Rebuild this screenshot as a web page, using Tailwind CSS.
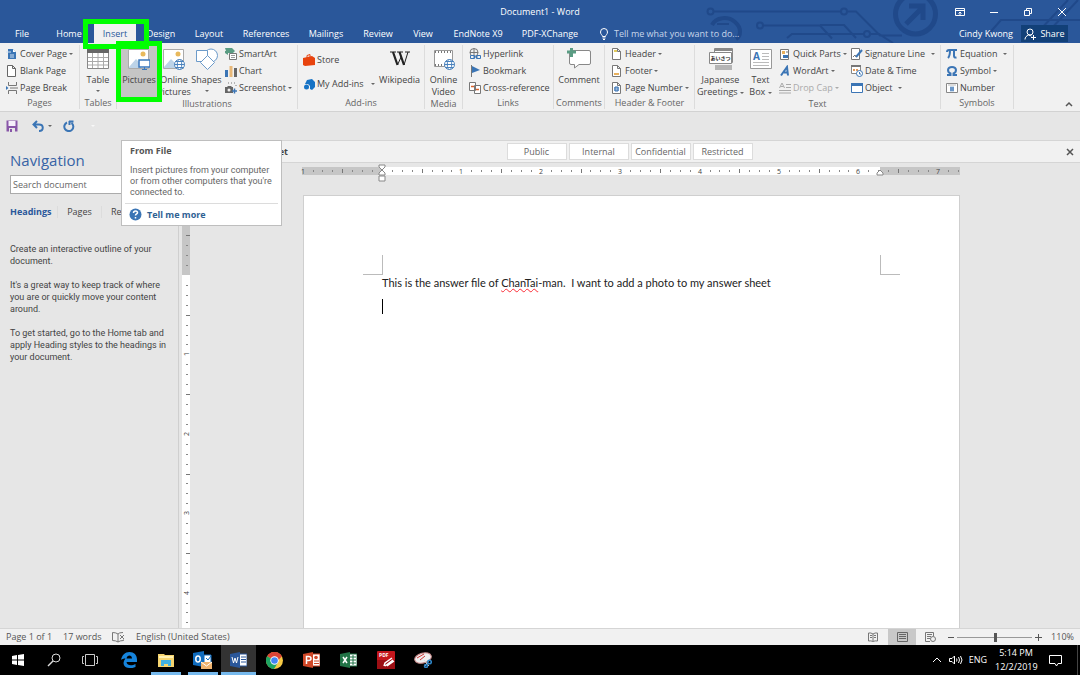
<!DOCTYPE html>
<html lang="en">
<head>
  <meta charset="UTF-8" />
  <title>Document1 - Word</title>
  <meta name="viewport" content="width=device-width, initial-scale=1.0" />
  <script src="https://cdn.jsdelivr.net/npm/@tailwindcss/browser@4"></script>
</head>
<body class="relative flex min-h-screen flex-col overflow-hidden bg-[#e6e6e6] font-['Open_Sans','Noto_Sans',sans-serif] text-[9px] leading-3 whitespace-nowrap text-[#444]">

  <!-- Shared drop-down arrow -->
  <svg class="hidden">
    <symbol id="arrow" viewBox="0 0 4 2"><path d="M0 0h4L2 2z" fill="#666" /></symbol>
  </svg>

  <!-- Title bar and tabs -->
  <header class="relative bg-[#2a579a] text-white">
    <svg class="absolute top-0 right-0 h-[43px] w-[380px]" viewBox="700 0 380 43" fill="none" stroke="#20498a" stroke-width="2">
      <circle cx="710.500" cy="11.500" r="3" />
      <path d="M714 11.500h127M848 11.500h8l24 24h22M763 25.500h57l12 13M787 38l5-4h72M871 34h8l14 9" />
      <circle cx="844" cy="11.500" r="3" />
      <circle cx="760" cy="25.500" r="3" />
      <circle cx="867" cy="34" r="3" />
      <path d="M712 25c4-8 16-9 23-3s6 14 1 17" stroke-width="4" />
      <path d="M717 24h12M820 25h24l12 13" />
      <circle cx="915.500" cy="14" r="20" stroke-width="5" />
      <path d="M906 24l16-16M909 6h14v14" stroke-width="5" />
      <path d="M985 38l16-18h79M1040 30l28-30M1050 30l28-30" />
    </svg>

    <div class="relative grid h-6 grid-cols-3 items-center">
      <span></span>
      <h1 class="text-center">Document1 - Word</h1>
      <div class="flex items-center justify-end gap-[22px] pr-3">
        <button aria-label="Ribbon display options"><svg class="h-3 w-3" viewBox="0 0 12 12" fill="none" stroke="#fff"><path d="M1.500 2.500h9v7h-9zM1.500 4.500h9M6 9V6M4.500 7.500L6 6l1.500 1.500" /></svg></button>
        <button aria-label="Minimize"><svg class="h-3 w-3" viewBox="0 0 12 12" stroke="#fff"><path d="M2 6.500h8" /></svg></button>
        <button aria-label="Restore"><svg class="h-3 w-3" viewBox="0 0 12 12" fill="none" stroke="#fff"><path d="M2.500 4.500h5v5h-5zM4.500 4V2.500h5v5H8" /></svg></button>
        <button aria-label="Close"><svg class="h-3 w-3" viewBox="0 0 12 12" stroke="#fff"><path d="M2 2l8 8M10 2l-8 8" /></svg></button>
      </div>
    </div>

    <div class="relative flex h-[19px] items-stretch justify-between">
      <nav class="flex text-center leading-[19px]">
        <a href="#" class="w-11">File</a>
        <a href="#" class="w-[50px]">Home</a>
        <a href="#" class="w-[42px] bg-[#f1f1f1] text-[#2a579a]">Insert</a>
        <a href="#" class="w-[50px]">Design</a>
        <a href="#" class="w-[46px]">Layout</a>
        <a href="#" class="w-[68px]">References</a>
        <a href="#" class="w-[52px]">Mailings</a>
        <a href="#" class="w-[52px]">Review</a>
        <a href="#" class="w-[38px]">View</a>
        <a href="#" class="w-[72px]">EndNote X9</a>
        <a href="#" class="w-[72px]">PDF-XChange</a>
        <a href="#" class="ml-3 flex items-center gap-1 text-[#c8d6ea]">
          <svg class="h-3 w-3" viewBox="0 0 12 12" fill="none" stroke="#fff"><path d="M4.500 8.500C4.500 7 2.500 6.500 2.500 4a3.500 3.500 0 017 0c0 2.500-2 3-2 4.500zM4.500 10h3M5 11.500h2" /></svg>
          Tell me what you want to do...
        </a>
      </nav>
      <div class="flex items-center gap-2 pr-3">
        <span>Cindy Kwong</span>
        <button class="flex h-[17px] w-[47px] items-center justify-center gap-1 bg-[#124078]">
          <svg class="h-3 w-3" viewBox="0 0 12 12" fill="none" stroke="#fff"><circle cx="6" cy="4" r="3" /><path d="M1 11.500C1 9 2.500 8 4.500 7l3 1M7 9.500h5M9.500 7v5" /></svg>
          Share
        </button>
      </div>
    </div>
  </header>

  <!-- Ribbon -->
  <section class="flex h-[69px] border-b border-[#d2d2d2] bg-[#f1f1f1] pt-[2px] pb-[2px]">

    <div class="flex w-20 shrink-0 flex-col border-r border-[#dcdcdc]">
      <div class="flex h-[54px] flex-col pl-[6px]">
        <button class="flex h-[17px] items-center gap-[2px]">
          <svg class="h-3 w-3" viewBox="0 0 12 12"><path d="M2 1h5l3 3v7H2z" fill="#3b75b5" /><path d="M7 1v3h3" fill="#fff" /><path d="M0 4h5M4 7h4M4 9h4" stroke="#cfe0f2" /></svg>
          Cover Page <svg class="h-[2px] w-1"><use href="#arrow" /></svg>
        </button>
        <button class="flex h-[17px] items-center gap-[2px]">
          <svg class="h-3 w-3" viewBox="0 0 12 12" fill="#fff" stroke="#666"><path d="M1.500.5h5l3 3v8h-8zM6.500.5v3h3" /></svg>
          Blank Page
        </button>
        <button class="flex h-[17px] items-center gap-[2px]">
          <svg class="h-3 w-3" viewBox="0 0 12 12" fill="none" stroke="#777"><path d="M2.500 0v3.500h8V0M2.500 12V8.500h8V12M4 6h8" /><path d="M0 4l2.500 2L0 8z" fill="#3b75b5" stroke="none" /></svg>
          Page Break
        </button>
      </div>
      <span class="text-center text-[#666]">Pages</span>
    </div>

    <div class="flex w-[37px] shrink-0 flex-col border-r border-[#dcdcdc]">
      <button class="flex h-[54px] flex-col items-center pt-[3px]">
        <svg class="mb-1 h-[22px] w-[22px] shrink-0" viewBox="0 0 22 22"><path d="M.5 1.500h21v19H.5z" fill="#fff" stroke="#888" /><path d="M0 1h22v4H0z" fill="#666" /><path d="M1 9.500h20M1 13.500h20M1 17h20M5.500 5v15M11 5v15M16.500 5v15" stroke="#aaa" /></svg>
        Table
        <svg class="mt-1 h-[2px] w-1"><use href="#arrow" /></svg>
      </button>
      <span class="text-center text-[#666]">Tables</span>
    </div>

    <div class="flex w-[181px] shrink-0 flex-col border-r border-[#dcdcdc]">
      <div class="flex h-[54px] pl-1">
        <button class="flex w-9 flex-col items-center bg-[#c5c5c5] pt-[3px]">
          <svg class="mb-1 h-[22px] w-[22px] shrink-0" viewBox="0 0 22 22"><path d="M.5 1.500h20v19H.5z" fill="#fff" stroke="#aaa" /><circle cx="15" cy="6" r="2.500" fill="#e8b95c" /><path d="M1 19l7-8 5 5v4H1z" fill="#bcd3e8" /><path d="M11 12h11v7H11z" fill="#fff" stroke="#3b78bd" stroke-width="1.500" /><path d="M14 21.500h5M16.500 19v3" stroke="#3b78bd" /></svg>
          Pictures
        </button>
        <button class="flex w-[34px] flex-col items-center pt-[3px]">
          <svg class="mb-1 h-[22px] w-[22px] shrink-0" viewBox="0 0 22 22"><path d="M.5 1.500h20v19H.5z" fill="#fff" stroke="#aaa" /><circle cx="15" cy="6" r="2.500" fill="#e8b95c" /><path d="M1 19l7-8 5 5v4H1z" fill="#bcd3e8" /><g fill="#fff" stroke="#4a82bd"><circle cx="16.500" cy="16.500" r="5" /><ellipse cx="16.500" cy="16.500" rx="2.200" ry="5" /><path d="M11.500 16.500h10M12.500 13.500h8M12.500 19.500h8" /></g></svg>
          <span>Online<br />Pictures</span>
        </button>
        <button class="flex w-[31px] flex-col items-center pt-[3px]">
          <svg class="mb-1 h-[22px] w-[22px] shrink-0" viewBox="0 0 22 22" fill="#fff" stroke="#6c9bca"><circle cx="15" cy="7.500" r="6.500" /><path d="M.5 2.500h11v11H.5z" /><path d="M11.500 7.500l7 7-7 7-7-7z" /></svg>
          Shapes
          <svg class="mt-1 h-[2px] w-1"><use href="#arrow" /></svg>
        </button>
        <div class="flex flex-col pl-[3px]">
          <button class="flex h-[17px] items-center gap-[2px]">
            <svg class="h-3 w-3" viewBox="0 0 12 12"><path d="M0 0h7l3 3-2 2H3v2L0 5V3h1z" fill="#5a9c83" /><path d="M4.500 5.500h7v6h-7z" fill="#fff" stroke="#777" /><path d="M6 7.500h4M6 9.500h4" stroke="#999" /></svg>
            SmartArt
          </button>
          <button class="flex h-[17px] items-center gap-[2px]">
            <svg class="h-3 w-3" viewBox="0 0 12 12"><path d="M0 5h3v7H0z" fill="#3b75b5" /><path d="M4.500 1h3v11h-3z" fill="#e8b878" /><path d="M9 3h3v9H9z" fill="#666" /></svg>
            Chart
          </button>
          <button class="flex h-[17px] items-center gap-[2px]">
            <svg class="h-3 w-3" viewBox="0 0 12 12"><path d="M0 5h2l1-1h3l1 1h1v6H0z" fill="#666" /><circle cx="4" cy="8" r="1.500" fill="#f1f1f1" /><path d="M3 1h1M6 1h1M9 1h1M11 3v1" stroke="#777" /><path d="M7 9h5M9.500 6.500v5" stroke="#3b75b5" stroke-width="1.500" /></svg>
            Screenshot <svg class="h-[2px] w-1"><use href="#arrow" /></svg>
          </button>
        </div>
      </div>
      <span class="text-center text-[#666]">Illustrations</span>
    </div>

    <div class="flex w-[127px] shrink-0 flex-col border-r border-[#dcdcdc]">
      <div class="flex h-[54px] justify-between pr-1 pl-[5px]">
        <div class="flex flex-col pt-[3px]">
          <button class="flex h-6 items-center gap-[2px]">
            <svg class="h-3 w-3" viewBox="0 0 12 12"><path d="M0 4l9-2 3 2v7l-10 1L0 11z" fill="#e8430e" /><path d="M4 4V1.500L7 .5V3" fill="none" stroke="#e8430e" /></svg>
            Store
          </button>
          <button class="flex h-6 items-center gap-[2px]">
            <svg class="h-3 w-3" viewBox="0 0 12 12" fill="#1673c5"><path d="M4 2l5-1 3 3v5l-3 3-2-1V8L5 6H2z" /><circle cx="3.500" cy="9" r="2.500" /></svg>
            My Add-ins <svg class="ml-[5px] h-[2px] w-1"><use href="#arrow" /></svg>
          </button>
        </div>
        <button class="flex flex-col items-center pt-[3px]">
          <svg class="mb-1 h-[22px] w-[22px] shrink-0" viewBox="0 0 22 22" fill="none" stroke="#222"><path d="M1 4h6M8 4h6M16 4h5" /><path d="M4 4l4.500 13M10.500 4L15 17" stroke-width="2.200" /><path d="M8.500 17l4-9M15 17l4-13" /></svg>
          Wikipedia
        </button>
      </div>
      <span class="text-center text-[#666]">Add-ins</span>
    </div>

    <div class="flex w-[38px] shrink-0 flex-col border-r border-[#dcdcdc]">
      <button class="flex h-[54px] flex-col items-center pt-[3px]">
        <svg class="mb-1 h-[22px] w-[22px] shrink-0" viewBox="0 0 22 22"><path d="M1.500 2.500h18v16h-18z" fill="#fff" stroke="#999" /><path d="M2 4h17M2 17h17" stroke="#777" stroke-width="2" stroke-dasharray="1 2" /><g fill="#fff" stroke="#4a82bd"><circle cx="16.500" cy="16.500" r="5" /><ellipse cx="16.500" cy="16.500" rx="2.200" ry="5" /><path d="M11.500 16.500h10M12.500 13.500h8M12.500 19.500h8" /></g></svg>
        <span>Online<br />Video</span>
      </button>
      <span class="text-center text-[#666]">Media</span>
    </div>

    <div class="flex w-[91px] shrink-0 flex-col border-r border-[#dcdcdc]">
      <div class="flex h-[54px] flex-col pl-[6px]">
        <button class="flex h-[17px] items-center gap-[2px]">
          <svg class="h-3 w-3" viewBox="0 0 12 12" fill="none"><g stroke="#777"><circle cx="5" cy="4.500" r="4" /><path d="M1 4.500h8M5 .5v8" /></g><path d="M1.500 7.500h4v3h-4zM7.500 7.500h4v3h-4zM4 9h5" fill="#f1f1f1" stroke="#3b75b5" /></svg>
          Hyperlink
        </button>
        <button class="flex h-[17px] items-center gap-[2px]">
          <svg class="h-3 w-3" viewBox="0 0 12 12"><path d="M2.500 0v12" stroke="#777" /><path d="M3 1l8 4-8 3z" fill="#3b75b5" /></svg>
          Bookmark
        </button>
        <button class="flex h-[17px] items-center gap-[2px]">
          <svg class="h-3 w-3" viewBox="0 0 12 12" fill="#fff" stroke="#777"><path d="M.5.5h6v8h-6zM5.500 3.500h6v8h-6z" /><path d="M2 4.500h3M7 7.500h3" stroke="#d9622b" stroke-width="1.500" /></svg>
          Cross-reference
        </button>
      </div>
      <span class="text-center text-[#666]">Links</span>
    </div>

    <div class="flex w-[51px] shrink-0 flex-col border-r border-[#dcdcdc]">
      <button class="flex h-[54px] flex-col items-center pt-[3px]">
        <svg class="mb-1 h-[22px] w-6 shrink-0" viewBox="0 0 24 22"><path d="M4 2.500h18q1.500 0 1.500 1.500v11q0 1.500-1.500 1.500h-10L7.500 20v-3.500H4q-1.500 0-1.500-1.500V4q0-1.500 1.500-1.500z" fill="#fff" stroke="#888" /><path d="M0 4h9M4.500 0v9" stroke="#5a9c83" stroke-width="3" /></svg>
        Comment
      </button>
      <span class="text-center text-[#666]">Comments</span>
    </div>

    <div class="flex w-[90px] shrink-0 flex-col border-r border-[#dcdcdc]">
      <div class="flex h-[54px] flex-col pl-[6px]">
        <button class="flex h-[17px] items-center gap-[2px]">
          <svg class="h-3 w-3" viewBox="0 0 12 12"><path d="M1.500.5h5l3 3v8h-8zM6.500.5v3h3" fill="#fff" stroke="#777" /><path d="M3 2h3v2H3z" fill="#e2cb5c" /></svg>
          Header <svg class="h-[2px] w-1"><use href="#arrow" /></svg>
        </button>
        <button class="flex h-[17px] items-center gap-[2px]">
          <svg class="h-3 w-3" viewBox="0 0 12 12"><path d="M1.500.5h5l3 3v8h-8zM6.500.5v3h3" fill="#fff" stroke="#777" /><path d="M3 8h5v2H3z" fill="#e8b05c" /></svg>
          Footer <svg class="h-[2px] w-1"><use href="#arrow" /></svg>
        </button>
        <button class="flex h-[17px] items-center gap-[2px]">
          <svg class="h-3 w-3" viewBox="0 0 12 12"><path d="M1.500.5h5l3 3v8h-8zM6.500.5v3h3" fill="#fff" stroke="#777" /><path d="M4 5h3v4H4zM3 6h5M3 8h5" fill="none" stroke="#3b75b5" /></svg>
          Page Number <svg class="h-[2px] w-1"><use href="#arrow" /></svg>
        </button>
      </div>
      <span class="text-center text-[#666]">Header &amp; Footer</span>
    </div>

    <div class="flex w-[246px] shrink-0 flex-col border-r border-[#dcdcdc]">
      <div class="flex h-[54px]">
        <button class="flex w-[51px] flex-col items-center pt-[3px]">
          <svg class="mb-1 h-[22px] w-6 shrink-0" viewBox="0 0 24 22"><path d="M5.500.5h18v14h-18z" fill="#fff" stroke="#888" /><path d="M5 1h18v2H5z" fill="#888" /><path d="M6 17h17v5H6z" fill="#b5b5b5" /><path d="M.5 4.500h22v11H.5z" fill="#fff" stroke="#888" /><text x="11.500" y="12" text-anchor="middle" font-size="5" font-weight="700" font-family="'Noto Sans CJK JP', sans-serif" fill="#222">あいさつ</text></svg>
          <span>Japanese<br />Greetings <svg class="inline h-[2px] w-1"><use href="#arrow" /></svg></span>
        </button>
        <button class="flex w-[29px] flex-col items-center pt-[3px]">
          <svg class="mb-1 h-[22px] w-[22px] shrink-0" viewBox="0 0 22 22"><path d="M.5 1.500h21v19H.5z" fill="#fff" stroke="#999" /><text x="3" y="12" font-size="10" font-weight="700" fill="#3b75b5">A</text><path d="M12 5.500h7M12 8.500h7M12 11.500h7M3 14.500h16M3 17.500h16" stroke="#bbb" /></svg>
          <span>Text<br />Box <svg class="inline h-[2px] w-1"><use href="#arrow" /></svg></span>
        </button>
        <div class="flex w-[72px] flex-col pl-1">
          <button class="flex h-[17px] items-center gap-[2px]">
            <svg class="h-3 w-3" viewBox="0 0 12 12"><path d="M1.500 1.500h8v10h-8z" fill="#fff" stroke="#777" /><path d="M3 3h3v3H3z" fill="#e8b05c" /><path d="M4 7h5v3H4z" fill="#3b75b5" /><path d="M7 4h2" stroke="#777" /></svg>
            Quick Parts <svg class="h-[2px] w-1"><use href="#arrow" /></svg>
          </button>
          <button class="flex h-[17px] items-center gap-[2px]">
            <svg class="h-3 w-3" viewBox="0 0 12 12" fill="none" stroke="#3b75b5" stroke-width="2"><path d="M2 10.500l6-8.500 1 8.500M5 7.500h4" /></svg>
            WordArt <svg class="h-[2px] w-1"><use href="#arrow" /></svg>
          </button>
          <button class="flex h-[17px] items-center gap-[2px] text-[#aaa]">
            <svg class="h-3 w-3" viewBox="0 0 12 12" fill="none" stroke="#aaa"><path d="M.5 6L3 1l2.500 5M1.500 4.500h3M7 2.500h5M7 5.500h5M0 8.500h12M0 11h12" /></svg>
            Drop Cap <svg class="h-[2px] w-1 opacity-50"><use href="#arrow" /></svg>
          </button>
        </div>
        <div class="flex flex-col pl-1">
          <button class="flex h-[17px] items-center gap-[2px]">
            <svg class="h-3 w-3" viewBox="0 0 12 12"><path d="M.5.5h8v11h-8z" fill="#fff" stroke="#777" /><path d="M2 9l2-2 1 2" fill="none" stroke="#777" /><path d="M5 9l6-7" stroke="#3b75b5" stroke-width="2" /></svg>
            Signature Line <svg class="ml-1 h-[2px] w-1"><use href="#arrow" /></svg>
          </button>
          <button class="flex h-[17px] items-center gap-[2px]">
            <svg class="h-3 w-3" viewBox="0 0 12 12"><path d="M.5.5h9v8h-9z" fill="#fff" stroke="#888" /><path d="M0 0h10v2H0z" fill="#777" /><path d="M2 4h2v2H2zM5 4h2v2H5z" fill="#e39a5a" /><circle cx="8.500" cy="8.500" r="3" fill="#fff" stroke="#3b75b5" /><path d="M8.500 7v2H10" fill="none" stroke="#3b75b5" /></svg>
            Date &amp; Time
          </button>
          <button class="flex h-[17px] items-center gap-[2px]">
            <svg class="h-3 w-3" viewBox="0 0 12 12"><path d="M.5 1.500h11v9H.5z" fill="#fff" stroke="#3b75b5" /><path d="M0 1h12v3H0z" fill="#3b75b5" /></svg>
            Object <svg class="ml-1 h-[2px] w-1"><use href="#arrow" /></svg>
          </button>
        </div>
      </div>
      <span class="text-center text-[#666]">Text</span>
    </div>

    <div class="flex w-[73px] shrink-0 flex-col border-r border-[#dcdcdc]">
      <div class="flex h-[54px] flex-col pl-[5px]">
        <button class="flex h-[17px] items-center gap-[2px]">
          <svg class="h-3 w-3" viewBox="0 0 12 12" fill="none" stroke="#3b75b5" stroke-width="2"><path d="M1 4q0-2 2-2h8M4 2q0 6-2 8M8 2v6q0 2 2.500 1.500" /></svg>
          Equation <svg class="ml-1 h-[2px] w-1"><use href="#arrow" /></svg>
        </button>
        <button class="flex h-[17px] items-center gap-[2px]">
          <svg class="h-3 w-3" viewBox="0 0 12 12" fill="none" stroke="#3b75b5" stroke-width="2"><path d="M1 10h3.500V8.500C1 7 1 2 6 2s5 5 1.500 6.500V10H11" /></svg>
          Symbol <svg class="h-[2px] w-1"><use href="#arrow" /></svg>
        </button>
        <button class="flex h-[17px] items-center gap-[2px]">
          <svg class="h-3 w-3" viewBox="0 0 12 12"><path d="M.5 1.500h11v9H.5z" fill="#fff" stroke="#888" /><path d="M2 3h8" stroke="#bbb" /><path d="M5 4.500v5M7 4.500v5M4 6h4M4 8h4" stroke="#3b75b5" /></svg>
          Number
        </button>
      </div>
      <span class="text-center text-[#666]">Symbols</span>
    </div>

    <button class="ml-auto flex items-end pr-[7px]" aria-label="Collapse the ribbon">
      <svg class="h-2 w-2" viewBox="0 0 8 8" fill="none" stroke="#555" stroke-width="1.500"><path d="M1 5l3-3 3 3" /></svg>
    </button>
  </section>

  <!-- Quick access toolbar -->
  <div class="flex h-7 items-center pl-[6px]">
    <button aria-label="Save"><svg class="h-3 w-3" viewBox="0 0 12 12"><path d="M.5.5h11v11H.5z" fill="#8856a8" /><path d="M2.500 1h7v5h-7z" fill="#f5effa" /><path d="M3 8h6v4H3z" fill="#e6e6e6" /><path d="M4 9h2v3H4z" fill="#8856a8" /></svg></button>
    <button class="ml-[14px] flex items-center gap-1" aria-label="Undo"><svg class="h-3 w-3" viewBox="0 0 12 12" fill="none" stroke="#3b75b5" stroke-width="2"><path d="M5 1L1.500 4.500 5 8M2 4.500h5c5 0 5 6.500 0 6.500" /></svg><svg class="h-[2px] w-1"><use href="#arrow" /></svg></button>
    <button class="ml-[11px]" aria-label="Repeat"><svg class="h-3 w-3" viewBox="0 0 12 12" fill="none" stroke="#3b75b5" stroke-width="2"><path d="M4 2.500a4.500 4.500 0 104.500.5M6.500 1v4M6 1.500h4.500" /></svg></button>
    <svg class="ml-4 h-[2px] w-1" viewBox="0 0 4 2"><path d="M0 0h4L2 2z" fill="#f8f8f8" /></svg>
  </div>

  <main class="flex flex-1">
    <!-- Navigation pane -->
    <aside class="w-[179px] shrink-0 border-r border-[#cfcfcf] pt-[10px] pl-[10px] whitespace-normal">
      <h2 class="text-[15px] leading-5 text-[#3763a5]">Navigation</h2>
      <input type="text" aria-label="Search document" placeholder="Search document" class="mt-[5px] h-[19px] w-[158px] border border-[#ababab] bg-white px-[2px] placeholder:text-[#666]" />
      <div class="mt-3 flex h-3">
        <a href="#" class="w-12 border-r border-[#dcdcdc] font-bold text-[#2a579a]">Headings</a>
        <a href="#" class="w-11 border-r border-[#dcdcdc] text-center">Pages</a>
        <a href="#" class="pl-[9px]">Results</a>
      </div>
      <div class="mt-[25px] flex w-[164px] flex-col gap-3 font-['Roboto','Open_Sans',sans-serif]">
        <p>Create an interactive outline of your<br />document.</p>
        <p>It's a great way to keep track of where<br />you are or quickly move your content<br />around.</p>
        <p>To get started, go to the Home tab and<br />apply Heading styles to the headings in<br />your document.</p>
      </div>
    </aside>

    <section class="flex min-w-0 flex-1 flex-col">
      <!-- Classification bar -->
      <div class="grid h-[23px] grid-cols-[1fr_auto_1fr] items-center border-y border-[#d5d5d5] bg-[#f1f1f1]">
        <span class="w-[109px] text-right font-bold">Not Set</span>
        <div class="flex gap-[2px]">
          <button class="h-[17px] w-[60px] border border-[#dcdcdc] bg-white text-[#666]">Public</button>
          <button class="h-[17px] w-[60px] border border-[#dcdcdc] bg-white text-[#666]">Internal</button>
          <button class="h-[17px] w-[60px] border border-[#dcdcdc] bg-white text-[#666]">Confidential</button>
          <button class="h-[17px] w-[60px] border border-[#dcdcdc] bg-white text-[#666]">Restricted</button>
        </div>
        <button class="justify-self-end pr-[6px]" aria-label="Close bar"><svg class="h-2 w-2" viewBox="0 0 8 8" stroke="#555" stroke-width="1.500"><path d="M1 1l6 6M7 1L1 7" /></svg></button>
      </div>

      <div class="flex flex-1">
        <div class="flex w-[11px] pt-8 pl-[3px]">
          <svg id="vruler" class="h-[433px] w-2 overflow-visible bg-white"></svg>
        </div>
        <div class="flex flex-1 flex-col items-center pr-[7px]">
          <svg id="hruler" class="mt-[3px] h-4 w-[657px] overflow-visible"></svg>
          <article class="mt-[13px] w-[657px] flex-1 border border-b-0 border-[#cfcfcf] bg-white pt-[59px] text-black">
            <div class="flex justify-between px-[59px]">
              <span class="h-5 w-5 border-r border-b border-[#bbb]"></span>
              <span class="h-5 w-5 border-b border-l border-[#bbb]"></span>
            </div>
            <p class="px-[78px] font-['Lato','Liberation_Sans',sans-serif] text-[11px] leading-[15px] whitespace-pre text-[#222]">This is the answer file of <span class="underline decoration-red-500 decoration-wavy decoration-1 underline-offset-1">ChanTai</span>-man.  I want to add a photo to my answer sheet</p>
            <div class="mt-[9px] ml-[78px] h-[15px] w-px bg-black"></div>
          </article>
        </div>
      </div>
    </section>
  </main>

  <!-- Status bar -->
  <footer class="flex h-[17px] items-center border-t border-[#d5d5d5] bg-[#f1f1f1] pl-[6px] text-[#555]">
    <span class="w-[57px]">Page 1 of 1</span>
    <span class="w-[49px]">17 words</span>
    <button class="w-6" aria-label="Proofing"><svg class="h-3 w-3" viewBox="0 0 12 12" fill="none" stroke="#777"><path d="M6 3Q4 1.500.5 1.500v8Q4 9.500 6 11zM6 3q1-1.500 5-1.500M6 11q2-1.500 5.500-1.500v-1M8 4l4 4M12 4L8 8" /></svg></button>
    <span>English (United States)</span>
    <div class="ml-auto flex items-center">
      <button class="flex h-4 w-[30px] items-center justify-center" aria-label="Read mode"><svg class="h-[10px] w-[10px]" viewBox="0 0 10 10" fill="none" stroke="#777"><path d="M5 2Q3 .5.5 1v8Q3 8.500 5 9.500 7 8.500 9.500 9V1Q7 .5 5 2v7M2 3.500h2M2 5.500h2M6 3.500h2M6 5.500h2" /></svg></button>
      <button class="flex h-4 w-7 items-center justify-center bg-[#c8c8c8]" aria-label="Print layout"><svg class="h-[10px] w-[11px]" viewBox="0 0 11 10" fill="none" stroke="#666"><path d="M.5.5h10v9H.5zM2 2.500h7M2 4.500h7M2 6.500h7" /></svg></button>
      <button class="flex h-4 w-7 items-center justify-center" aria-label="Web layout"><svg class="h-[10px] w-[11px]" viewBox="0 0 11 10" fill="none" stroke="#777"><path d="M5 9.500H.5v-9h8V4M2 2.500h5M2 4.500h4M2 6.500h3" /><circle cx="8" cy="7" r="2.500" /></svg></button>
      <button class="ml-1 h-px w-[6px] bg-[#555]" aria-label="Zoom out"></button>
      <input type="range" min="10" max="200" value="108" aria-label="Zoom" class="mx-[3px] h-[10px] w-[75px] appearance-none bg-transparent [&::-webkit-slider-runnable-track]:h-px [&::-webkit-slider-runnable-track]:bg-[#999] [&::-webkit-slider-thumb]:-mt-1 [&::-webkit-slider-thumb]:h-[9px] [&::-webkit-slider-thumb]:w-[3px] [&::-webkit-slider-thumb]:appearance-none [&::-webkit-slider-thumb]:bg-[#555]" />
      <button aria-label="Zoom in"><svg class="h-[7px] w-[7px]" viewBox="0 0 7 7" stroke="#555"><path d="M0 3.500h7M3.500 0v7" /></svg></button>
      <span class="w-[38px] pr-[6px] text-right">110%</span>
    </div>
  </footer>

  <!-- Taskbar -->
  <div class="flex h-[30px] bg-black text-white">
    <button class="flex w-9 items-center justify-center" aria-label="Start"><svg class="h-3 w-3" viewBox="0 0 12 12" fill="#fff"><path d="M0 2l5-1v4.500H0zM6 1l6-1v5.500H6zM0 6.500h5V11l-5-1zM6 6.500h6V12l-6-1z" /></svg></button>
    <button class="flex w-9 items-center justify-center" aria-label="Search"><svg class="h-[14px] w-[14px]" viewBox="0 0 14 14" fill="none" stroke="#ddd"><circle cx="9" cy="5" r="4" /><path d="M6 8l-5 5" stroke-width="1.500" /></svg></button>
    <button class="flex w-9 items-center justify-center" aria-label="Task view"><svg class="h-3 w-4" viewBox="0 0 16 12" fill="none" stroke="#ccc"><path d="M3.500.5h9v11h-9zM2 2.500H.5v7H2M14 2.500h1.500v7H14" /></svg></button>
    <button class="ml-[2px] flex w-[37px] items-center justify-center" aria-label="Edge"><svg class="h-4 w-4" viewBox="0 0 16 16"><path d="M0 8C1 3 4 0 8.500 0 13 0 16 3 16 7.500V10H5.500c.5 4 5.500 4 9 2v3c-2 1-4 1-6 1-5.500 0-8-5-4-9.500C2.500 6.500 1 7 0 8zm5.500-1.500h5.500c0-4-5-4-5.500 0z" fill="#1684dc" fill-rule="evenodd" /></svg></button>
    <button class="flex w-[37px] justify-center" aria-label="File Explorer"><span class="flex w-[30px] items-center justify-center border-b-3 border-[#76b9ed] pt-[3px]"><svg class="h-[14px] w-4" viewBox="0 0 16 14"><path d="M0 1h6l1 1h9v12H0z" fill="#f5d46f" /><path d="M1 3h14v2H1z" fill="#fff0b3" /><path d="M3 7h10v6h-3v-2H6v2H3z" fill="#40b0e0" /></svg></span></button>
    <button class="flex w-[37px] justify-center" aria-label="Outlook"><span class="flex w-[30px] items-center justify-center border-b-3 border-[#76b9ed] pt-[3px]"><svg class="h-[18px] w-5" viewBox="0 0 20 18"><path d="M0 2l11-2v16L0 14z" fill="#0f6bbd" /><path d="M11 4h7v8h-7z" fill="#fff" stroke="#0f6bbd" /><ellipse cx="5" cy="8" rx="2.200" ry="3" fill="none" stroke="#fff" stroke-width="1.500" /><path d="M13 7l2 2 3-4" fill="none" stroke="#0f6bbd" /><path d="M8 11h11v7H8z" fill="#efb36f" /><path d="M8 11l5.500 4 5.500-4" fill="none" stroke="#fff" /></svg></span></button>
    <button class="flex w-[35px] items-center justify-center border-b-3 border-[#76b9ed] bg-[#333] pt-[3px]" aria-label="Word"><svg class="h-4 w-[17px]" viewBox="0 0 17 16"><path d="M9 2h8v12H9z" fill="#fff" stroke="#2a579a" /><path d="M11 5h5M11 7.500h5M11 10h5" stroke="#2a579a" /><path d="M0 2l10-2v16L0 14z" fill="#2a579a" /><path d="M2 5l1.500 6L5 6l1.500 5L8 5" fill="none" stroke="#fff" /></svg></button>
    <button class="flex w-[37px] items-center justify-center" aria-label="Chrome"><svg class="h-[17px] w-[17px]" viewBox="0 0 17 17"><circle cx="8.500" cy="8.500" r="8.500" fill="#f6c945" /><path d="M8.500 8.500L1.100 4.300A8.500 8.500 0 0115.900 4.300z" fill="#db4437" /><path d="M1.100 4.300A8.500 8.500 0 008 17l4-6.500-3.500-2z" fill="#1da462" /><path d="M8.500 4.300h7.400L12 8.500z" fill="#db4437" /><circle cx="8.500" cy="8.500" r="4.200" fill="#fff" /><circle cx="8.500" cy="8.500" r="3.300" fill="#4285f4" /></svg></button>
    <button class="flex w-[37px] items-center justify-center" aria-label="PowerPoint"><svg class="h-4 w-[17px]" viewBox="0 0 17 16"><path d="M9 2h8v12H9z" fill="#fff" stroke="#d04727" /><path d="M11 9h5M11 11.500h5" stroke="#d04727" /><circle cx="13" cy="5.500" r="1.800" fill="#d04727" /><path d="M0 2l10-2v16L0 14z" fill="#d04727" /><path d="M3.500 12V4.500h2q2.500 0 2.500 2t-2.500 2h-2" fill="none" stroke="#fff" stroke-width="1.500" /></svg></button>
    <button class="flex w-[37px] items-center justify-center" aria-label="Excel"><svg class="h-4 w-[17px]" viewBox="0 0 17 16"><path d="M9 2h8v12H9z" fill="#fff" stroke="#217346" /><path d="M10 5h6M10 8h6M10 11h6M13 3v10" stroke="#217346" /><path d="M0 2l10-2v16L0 14z" fill="#217346" /><path d="M3 5l4 6M7 5l-4 6" stroke="#fff" stroke-width="1.500" /></svg></button>
    <button class="flex w-[37px] items-center justify-center" aria-label="PDF-XChange"><svg class="h-[18px] w-[18px]" viewBox="0 0 18 18"><rect width="18" height="18" rx="1" fill="#c4161c" /><path d="M0 9h18v9H0z" fill="#9c0f14" /><text x="2" y="6" font-size="5" font-weight="700" fill="#fff">PDF</text><path d="M7 15l1-3 7-5M10 15l7-5M8 15l8-6" stroke="#fff" stroke-width="1.500" fill="none" /></svg></button>
    <button class="flex w-[37px] items-center justify-center" aria-label="Snipping Tool"><svg class="h-4 w-[18px]" viewBox="0 0 18 16"><ellipse cx="9" cy="6" rx="8.500" ry="5" transform="rotate(-15 9 6)" fill="#eee" stroke="#c98a8a" /><path d="M3 6l7-4M6 8l5-4" stroke="#c33" /><path d="M10 8l5 6M15 8l-4 6" stroke="#ddd" /><g fill="none" stroke="#2f86c8" stroke-width="1.500"><circle cx="15.500" cy="10" r="1.800" /><circle cx="12" cy="14" r="1.500" /></g></svg></button>

    <div class="ml-auto flex items-center border-r border-[#444] pr-[15px]">
      <button aria-label="Show hidden icons"><svg class="h-3 w-[10px]" viewBox="0 0 10 12" fill="none" stroke="#fff"><path d="M1 8l4-4 4 4" /></svg></button>
      <button class="ml-[7px]" aria-label="Volume"><svg class="h-3 w-[14px]" viewBox="0 0 14 12" fill="none" stroke="#fff"><path d="M.5 4.500H3L5.500 2v8L3 7.500H.5zM7.500 4.500q1 1.500 0 3M9.500 3q2 3 0 6M11.500 2q3 4 0 8" /></svg></button>
      <span class="ml-[6px]">ENG</span>
      <div class="ml-2 w-[42px] text-center leading-[14px]">5:14 PM<br />12/2/2019</div>
      <button class="ml-3" aria-label="Notifications"><svg class="h-[13px] w-[13px]" viewBox="0 0 13 13" fill="none" stroke="#fff"><path d="M.5 1.500h12v8H9L7.500 12 6 9.500H.5z" /></svg></button>
    </div>
    <span class="w-[2px]"></span>
  </div>

  <!-- Pictures tooltip -->
  <div class="absolute top-[140px] left-[121px] w-[161px] border border-[#bebebe] bg-white px-[3px] pb-1 whitespace-normal text-[#555]">
    <h3 class="px-[5px] pt-1 font-bold">From File</h3>
    <p class="px-[5px] pt-2 pb-[5px] font-['Roboto','Open_Sans',sans-serif] leading-[11px] whitespace-nowrap text-[#666]">Insert pictures from your computer<br />or from other computers that you're<br />connected to.</p>
    <a href="#" class="flex items-center gap-[5px] border-t border-[#dcdcdc] px-1 pt-1 font-bold text-[#2f6193]">
      <svg class="h-[13px] w-[13px]" viewBox="0 0 13 13"><circle cx="6.500" cy="6.500" r="6" fill="#3b75b5" /><path d="M4.500 5q0-2 2-2t2 1.800c0 1.200-2 1.200-2 2.700M6.500 9v1.500" fill="none" stroke="#fff" stroke-width="1.500" /></svg>
      Tell me more
    </a>
  </div>

  <!-- Step highlights -->
  <div class="absolute top-[19px] left-[83px] h-[30px] w-[66px] border-5 border-[#00ff00]"></div>
  <div class="absolute top-[41px] left-[116px] h-[61px] w-[46px] border-5 border-[#00ff00]"></div>

  <script>
    const INCH = 79.4;

    // Horizontal ruler, zero at the left margin
    let h = '<rect x="-1" y="1" width="658" height="8" fill="#fff"/><rect x="-1" y="1" width="80" height="8" fill="#c6c6c6"/><rect x="577" y="1" width="80" height="8" fill="#c6c6c6"/>';
    for (let i = -8; i <= 58; i++) {
      const x = Math.round(79 + i * INCH / 8);
      if (i === 0) continue;
      if (i % 8 === 0) h += `<text x="${x}" y="8" font-size="7" text-anchor="middle" fill="#444">${Math.abs(i / 8)}</text>`;
      else if (i % 4 === 0) h += `<rect x="${x}" y="3" width="1" height="4" fill="#777"/>`;
      else h += `<rect x="${x}" y="4" width="1" height="2" fill="#888"/>`;
    }
    // indent markers
    h += '<path d="M76 -1h6v2l-3 3-3-3zM76 9V7l3-3 3 3v2zM76 10h6v5h-6zM574 9V7l3-3 3 3v2z" fill="#fff" stroke="#888"/>';
    document.getElementById("hruler").innerHTML = h;

    // Vertical ruler, zero at the top margin
    let v = '<rect x="0" y="0" width="8" height="80" fill="#c6c6c6"/>';
    for (let i = -7; i <= 35; i++) {
      const y = Math.round(80 + i * INCH / 8);
      if (i === 0) continue;
      if (i % 8 === 0) v += `<text transform="translate(7 ${y}) rotate(-90)" font-size="7" text-anchor="middle" fill="#444">${i / 8}</text>`;
      else if (i % 4 === 0) v += `<rect x="4" y="${y}" width="4" height="1" fill="#777"/>`;
      else v += `<rect x="4" y="${y}" width="2" height="1" fill="#888"/>`;
    }
    document.getElementById("vruler").innerHTML = v;
  </script>
</body>
</html>
